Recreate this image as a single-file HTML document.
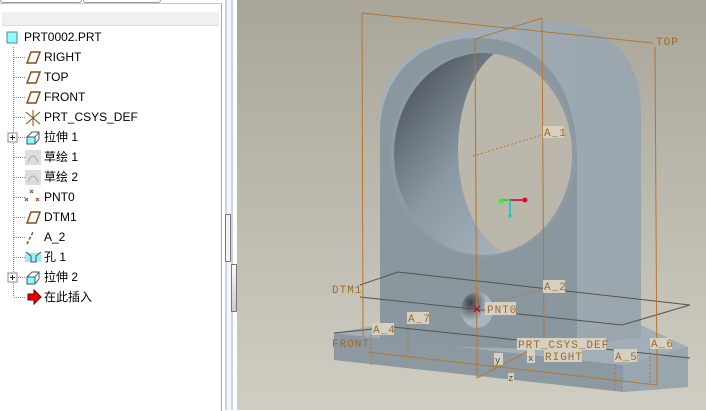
<!DOCTYPE html>
<html><head><meta charset="utf-8"><style>
*{margin:0;padding:0}
body{width:706px;height:410px;overflow:hidden;background:#fff;position:relative;font-family:"Liberation Sans","Noto Sans CJK SC",sans-serif;font-size:12px;color:#000}
.tree div{position:absolute;height:16px;line-height:16px;white-space:nowrap}
</style></head><body>
<div style="position:absolute;left:0;top:0;width:80px;height:2px;border:1px solid #999;border-top:none;border-radius:0 0 3px 3px"></div>
<div style="position:absolute;left:83px;top:0;width:76px;height:2px;border:1px solid #999;border-top:none;border-radius:0 0 3px 3px"></div>
<div style="position:absolute;left:0;top:3px;width:221px;height:407px;border-right:1px solid #a8a8a8;border-top:1px solid #c8c8c8"></div>
<div style="position:absolute;left:2px;top:12px;width:217px;height:13px;background:#f0f0f0;border-bottom:1px solid #ddd"></div>
<div style="position:absolute;left:223px;top:0;width:14px;height:410px;background:linear-gradient(90deg,#fff 0,#fff 2px,#c8d4e2 2px,#c8d4e2 4px,#f2f5f9 4px,#f2f5f9 8px,#c8d4e2 8px,#c8d4e2 10px,#fff 10px)"></div>
<div style="position:absolute;left:225px;top:214px;width:4px;height:46px;border:1px solid #777;background:#f4f4f4;border-radius:1px"></div>
<div style="position:absolute;left:231px;top:264px;width:4px;height:46px;border:1px solid #777;background:linear-gradient(#fafafa,#ccc);border-radius:1px"></div>
<svg width="221" height="410" style="position:absolute;left:0;top:0">
<g stroke="#888" stroke-dasharray="1,1" fill="none">
<line x1="13.5" y1="47" x2="13.5" y2="297"/>
<line x1="14" x2="26" y1="57.5" y2="57.5"/><line x1="14" x2="26" y1="77.5" y2="77.5"/><line x1="14" x2="26" y1="97.5" y2="97.5"/><line x1="14" x2="26" y1="117.5" y2="117.5"/><line x1="18" x2="26" y1="137.5" y2="137.5"/><line x1="14" x2="26" y1="157.5" y2="157.5"/><line x1="14" x2="26" y1="177.5" y2="177.5"/><line x1="14" x2="26" y1="197.5" y2="197.5"/><line x1="14" x2="26" y1="217.5" y2="217.5"/><line x1="14" x2="26" y1="237.5" y2="237.5"/><line x1="14" x2="26" y1="257.5" y2="257.5"/><line x1="18" x2="26" y1="277.5" y2="277.5"/><line x1="14" x2="26" y1="297.5" y2="297.5"/>
</g>
<rect x="7" y="32" width="10" height="11" fill="#8ff" stroke="#6b7f86"/>
<g fill="none" stroke="#8b4a1a" stroke-width="1.5">
<path d="M27,63 L31,52 L40,52 L36,63 Z"/><path d="M27,83 L31,72 L40,72 L36,83 Z"/><path d="M27,103 L31,92 L40,92 L36,103 Z"/><path d="M27,223 L31,212 L40,212 L36,223 Z"/>
<path d="M27,244 L33,232" stroke-dasharray="3,2"/>
</g>
<g stroke="#8b4a1a" stroke-width="1"><path d="M26,112 L40,124 M26,124 L40,112 M33,110 L33,126"/></g>
<g stroke="#8b4a1a"><path d="M30,190 l3,3 m0,-3 l-3,3 M25,198 l3,3 m0,-3 l-3,3 M36,198 l3,3 m0,-3 l-3,3"/></g>
<rect x="8" y="133" width="9" height="9" fill="#fff" stroke="#888"/><path d="M10,137.5h5M12.5,135v5" stroke="#225"/>
<rect x="8" y="273" width="9" height="9" fill="#fff" stroke="#888"/><path d="M10,277.5h5M12.5,275v5" stroke="#225"/>
<g><rect x="27" y="137" width="8" height="7" fill="#8ff" stroke="#456"/><path d="M27,137 l5,-5 h7 v7 l-4,5 M35,137 l4,-5" fill="none" stroke="#456"/></g>
<g><rect x="27" y="277" width="8" height="7" fill="#8ff" stroke="#456"/><path d="M27,277 l5,-5 h7 v7 l-4,5 M35,277 l4,-5" fill="none" stroke="#456"/></g>
<rect x="25" y="150" width="16" height="15" fill="#ddd"/><path d="M28,162 Q33,150 38,162" stroke="#aaa" fill="none"/>
<rect x="25" y="170" width="16" height="15" fill="#ddd"/><path d="M28,182 Q33,170 38,182" stroke="#aaa" fill="none"/>
<rect x="25" y="253" width="16" height="9" fill="#9ee"/><path d="M26,252 l5,4 v6 h5 v-6 l5,-4" fill="none" stroke="#456"/>
<path d="M28,294 h6 v-4 l7,7 l-7,7 v-4 h-6z" fill="#e00" stroke="#600"/>
</svg>
<div class="tree">
<div style="left:24px;top:29px">PRT0002.PRT</div>
<div style="left:44px;top:49px">RIGHT</div>
<div style="left:44px;top:69px">TOP</div>
<div style="left:44px;top:89px">FRONT</div>
<div style="left:44px;top:109px">PRT_CSYS_DEF</div>
<div style="left:44px;top:129px">拉伸 1</div>
<div style="left:44px;top:149px">草绘 1</div>
<div style="left:44px;top:169px">草绘 2</div>
<div style="left:44px;top:189px">PNT0</div>
<div style="left:44px;top:209px">DTM1</div>
<div style="left:44px;top:229px">A_2</div>
<div style="left:44px;top:249px">孔 1</div>
<div style="left:44px;top:269px">拉伸 2</div>
<div style="left:44px;top:289px">在此插入</div>
</div>
<svg width="469" height="410" viewBox="237 0 469 410" style="position:absolute;left:237px;top:0">
<defs>
<linearGradient id="bg" x1="0" y1="0" x2="0" y2="1"><stop offset="0" stop-color="#a9a699"/><stop offset="1" stop-color="#d0cec3"/></linearGradient>
<linearGradient id="side" x1="0" y1="0" x2="1" y2="0"><stop offset="0" stop-color="#a4b0b9"/><stop offset="1" stop-color="#9aa5ad"/></linearGradient>
<linearGradient id="hole" x1="0" y1="0" x2="1" y2="1"><stop offset="0" stop-color="#3e444a"/><stop offset="0.45" stop-color="#8a98a4"/><stop offset="1" stop-color="#b4c2cc"/></linearGradient>
<radialGradient id="sh" cx="0.3" cy="0.3"><stop offset="0" stop-color="#3a3f44"/><stop offset="1" stop-color="#a9b5bf"/></radialGradient>
<clipPath id="hc"><ellipse cx="483" cy="154" rx="89" ry="101"/></clipPath>
</defs>
<rect x="237" y="0" width="469" height="410" fill="url(#bg)"/>
<path d="M334,333 L623,365 L688,347 L688,387 L623,392 L334,360 Z" fill="#8d99a1"/>
<path d="M334,333 L380,325 L641,325 L688,347 L623,365 Z" fill="#a3afb8"/>
<path d="M623,365 L688,347 L688,387 L623,392 Z" fill="#9aa6ae"/>
<path d="M380,340 L380,113 C380,45 470,22 545,22 C612,22 641,60 641,113 L641,338 L577,345 Z" fill="url(#side)"/>
<path d="M380,345 L380,135 C380,70 425,38 478,38 C540,38 577,85 577,160 L577,350 Z" fill="#8b979f"/>
<ellipse cx="483" cy="154" rx="93" ry="103" fill="#8f9ba4"/>
<ellipse cx="483" cy="154" rx="89" ry="101" fill="url(#hole)"/>
<ellipse cx="518" cy="150" rx="60" ry="105" fill="#bbb8ab" clip-path="url(#hc)"/>
<ellipse cx="477" cy="310" rx="16" ry="18" fill="url(#sh)"/>
<g stroke="#55544e" stroke-width="1" fill="none">
<path d="M360,285 L398,272 L690,305 L622,325 L360,297"/>
<path d="M393,327 L690,358"/>
<path d="M334,333 L393,327"/>
</g>
<g stroke="#b5762f" stroke-width="1" fill="none">
<path d="M362,13 L653,43 M362,13 L363,337 M655,47 L657,385"/>
<path d="M475,39 L542,18 L544,338 M475,39 L477,378 L544,343"/>
<path d="M367,352 L657,385"/>
<path d="M473,156 L542,135 M492,302 L542,290" stroke-dasharray="2,2"/>
<path d="M371,335 v30 M408,325 v30 M615,360 v32 M650,348 v37" stroke-dasharray="2,2"/>
</g>
<path d="M510,200 H524" stroke="#c02" stroke-width="1.5"/><circle cx="525" cy="200" r="2.5" fill="#e02"/>
<path d="M510,200 H502" stroke="#2c2" stroke-width="1.5"/><circle cx="501" cy="201" r="2.5" fill="#3e3"/>
<path d="M510,200 V215" stroke="#0cc" stroke-width="1.5"/><circle cx="510" cy="216" r="1.5" fill="#0cc"/>
<path d="M474,306 l6,6 m0,-6 l-6,6" stroke="#a02"/>
<g fill="#d5d1c2">
<rect x="543" y="126" width="21" height="12"/><rect x="543" y="280" width="22" height="13"/><rect x="485" y="302" width="31" height="13"/>
<rect x="407" y="312" width="22" height="12"/><rect x="372" y="323" width="22" height="12"/><rect x="517" y="338" width="89" height="12"/>
<rect x="650" y="338" width="22" height="11"/><rect x="544" y="349" width="38" height="13"/><rect x="614" y="349" width="23" height="13"/>
<rect x="494" y="353" width="9" height="12"/><rect x="527" y="350" width="8" height="13"/><rect x="508" y="373" width="6" height="9"/>
</g>
<g font-family="Liberation Mono,monospace" font-size="11" fill="#a06a2a" letter-spacing="1">
<text x="656" y="45">TOP</text><text x="544" y="136">A_1</text><text x="332" y="293">DTM1</text><text x="544" y="290">A_2</text>
<text x="487" y="313">PNT0</text><text x="408" y="322">A_7</text><text x="373" y="333">A_4</text><text x="332" y="347">FRONT</text>
<text x="518" y="348">PRT_CSYS_DEF</text><text x="651" y="347">A_6</text><text x="545" y="360">RIGHT</text><text x="615" y="360">A_5</text>
</g>
<g font-family="Liberation Mono,monospace" font-size="9" fill="#444"><text x="495" y="363">y</text><text x="528" y="361">x</text><text x="508" y="381">z</text></g>
</svg>
</body></html>
